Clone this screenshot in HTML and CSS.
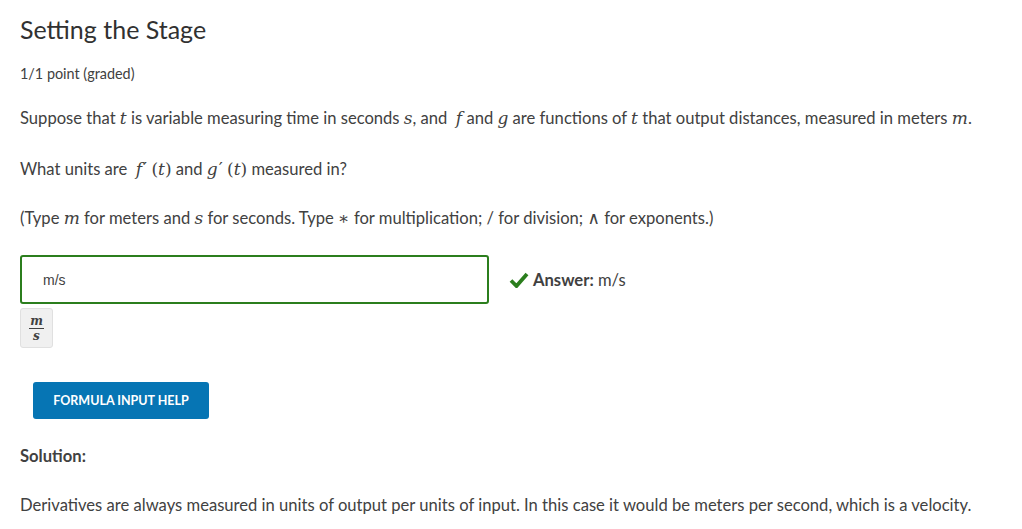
FILE: index.html
```html
<!DOCTYPE html>
<html>
<head>
<meta charset="utf-8">
<link rel="stylesheet" href="styles.css">
</head>
<body>
<div class="problem">
  <h2 class="title">Setting the Stage</h2>
  <div class="points">1/1 point (graded)</div>
  <p class="para p1">Suppose that <span class="m">t</span> is variable measuring time in seconds <span class="m">s</span>, and &nbsp;<span class="m">f</span> and <span class="m">g</span> are functions of <span class="m">t</span> that output distances, measured in meters <span class="m">m</span>.</p>
  <p class="para p2">What units are &nbsp;<span class="m">f</span><span class="prime">′</span> <span class="mr">(</span><span class="m">t</span><span class="mr">)</span> and <span class="m">g</span><span class="prime">′</span> <span class="mr">(</span><span class="m">t</span><span class="mr">)</span> measured in?</p>
  <p class="para p3">(Type <span class="m">m</span> for meters and <span class="m">s</span> for seconds. Type <span class="mr">∗</span> for multiplication; / for division; <span class="mr">∧</span> for exponents.)</p>
  <div class="answer-row">
    <div class="input">m/s</div>
    <div class="status">
      <svg class="check" width="20" height="16" viewBox="0 0 20 16"><path d="M2 8.5 L7.5 14 L18 2" fill="none" stroke="#2b7e1d" stroke-width="3.8" stroke-linejoin="miter"/></svg>
      <span class="ans-label">Answer:</span>&nbsp;<span class="ans-val">m/s</span>
    </div>
  </div>
  <div class="preview">
    <span class="frac"><span class="num m">m</span><span class="den m">s</span></span>
  </div>
  <div class="btn-row"><button class="help">FORMULA INPUT HELP</button></div>
  <div class="solution-label">Solution:</div>
  <p class="para last">Derivatives are always measured in units of output per units of input. In this case it would be meters per second, which is a velocity.</p>
</div>
</body>
</html>
```
FILE: styles.css
```css
html, body { margin: 0; padding: 0; background: #fff; }
body {
  font-family: "Source Sans Pro", "Lato", "Liberation Sans", sans-serif;
  color: #414141;
}
.problem { padding: 0 20px; }
.title {
  margin: 0;
  padding-top: 13px;
  font-size: 25px;
  font-weight: 400;
  color: #313131;
  line-height: 32px;
}
.points {
  margin-top: 20px;
  font-size: 14.4px;
  line-height: 18px;
  color: #414141;
}
.para {
  margin: 0;
  font-size: 16.6px;
  line-height: 24px;
}
.p1 { margin-top: 23px; }
.p2 { margin-top: 27px; }
.p3 { margin-top: 25px; }
.m {
  font-family: "DejaVu Serif", "Liberation Serif", serif;
  font-style: italic;
  font-size: 17px;
}
.mr {
  font-family: "DejaVu Serif", "Liberation Serif", serif;
  font-size: 17px;
}
.prime {
  font-family: "DejaVu Sans", sans-serif;
  font-size: 18px;
  margin-left: 1px;
}
.answer-row {
  display: flex;
  align-items: center;
  margin-top: 25px;
}
.input {
  box-sizing: border-box;
  width: 469px;
  height: 49px;
  border: 2px solid #2b7e1d;
  border-radius: 3px;
  padding: 0 0 0 21px;
  display: flex;
  align-items: center;
  font-family: "Liberation Sans", Arial, sans-serif;
  font-size: 14px;
  color: #414141;
}
.status {
  display: flex;
  align-items: center;
  margin-left: 20px;
  font-size: 16.6px;
}
.check { margin-right: 4px; }
.ans-label { font-weight: 700; }
.preview {
  box-sizing: border-box;
  width: 33px;
  height: 40px;
  margin-top: 4px;
  background: #f0f0f0;
  border: 1px solid #e0e0e0;
  border-radius: 3px;
  display: flex;
  align-items: center;
  justify-content: center;
}
.frac {
  display: flex;
  flex-direction: column;
  align-items: center;
}
.frac .m { font-size: 12px; line-height: 12px; font-weight: 700; }
.frac .num { border-bottom: 1px solid #414141; padding: 0 1px 1px; }
.frac .den { padding-top: 1px; }
.btn-row { margin-top: 34px; padding-left: 13px; }
.help {
  width: 176px;
  height: 37px;
  border: none;
  border-radius: 3px;
  background: #0675b4;
  color: #fff;
  font-family: "Source Sans Pro", "Lato", "Liberation Sans", sans-serif;
  font-size: 12.5px;
  font-weight: 700;
  padding: 0;
}
.solution-label {
  margin-top: 25px;
  font-size: 16.6px;
  font-weight: 700;
  line-height: 24px;
}
.last { margin-top: 25px; }
```
